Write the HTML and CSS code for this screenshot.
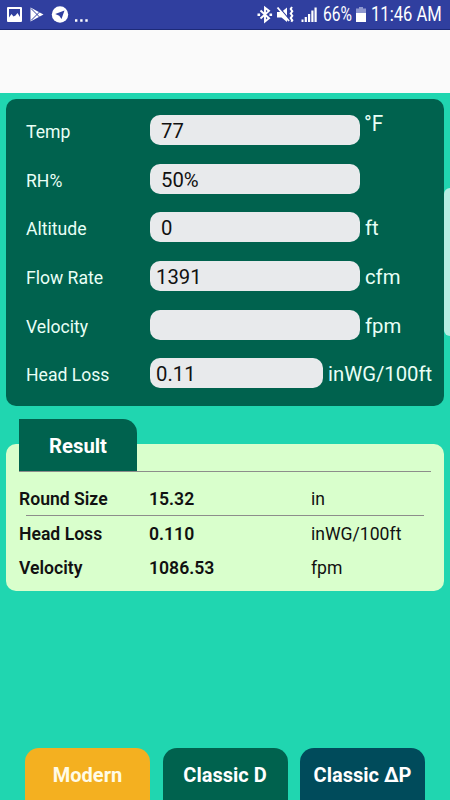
FILE: index.html
```
<!DOCTYPE html>
<html lang="en">
<head>
    <meta charset="utf-8">
    <title>Duct Sizer</title>
    <link rel="stylesheet" href="styles.css">
</head>
<body>
<div class="status-bar">
    <svg class="status-icons" width="90" height="30" viewBox="0 0 90 30">
        <path fill="#fff" fill-rule="evenodd" d="M8 7h13a1 1 0 0 1 1 1v13a1 1 0 0 1-1 1H8a1 1 0 0 1-1-1V8a1 1 0 0 1 1-1zM9 9v8.500l2.500-3.500 2 2.500 2-1 2-2.500 2.500 4V9z"/>
        <path fill="#fff" d="M30.500 7.500v14l13-7z"/>
        <path fill="none" stroke="#303f9f" stroke-width="1" d="M31 8.500l8.500 8.500M31 20.500l8.500-8.500"/>
        <circle cx="60" cy="14.500" r="8.200" fill="#fff"/>
        <path fill="#303f9f" d="M64.500 10.500l-3 8.500-2.300-3.200-4-1.700z"/>
        <path fill="#fff" d="M75 19.300h2.400v2.400H75zM80.200 19.300h2.400v2.400h-2.400zM85.300 19.300h2.400v2.400h-2.400z"/>
    </svg>
    <div class="status-right">
        <svg width="62" height="30" viewBox="257 0 62 30">
            <path fill="none" stroke="#fff" stroke-width="1.900" d="M260.500 10.500l8.500 7.800-4 3.200V7.700l4 3.200-8.500 7.600"/>
            <path fill="#fff" d="M257.500 13.500h2.600v2.400h-2.600zM269.500 13.500h2.600v2.400h-2.600zM277 12h4.500l5.500-4.500v14.500l-5.500-4.500H277z"/>
            <path stroke="#303f9f" stroke-width="1.200" d="M279.200 7.500l10.500 12.500"/>
            <path stroke="#fff" stroke-width="1.900" d="M277.500 7.500l11.500 13.500"/>
            <path fill="none" stroke="#fff" stroke-width="2" d="M292 7l-1.300 2 1.600 2.200-1.600 2.300 1.600 2.300-1.600 2.300 1.600 2.200-1 1.500"/>
            <path fill="#fff" d="M301.500 19.500h2v2.500h-2zM304.700 17h2.200v5h-2.200zM308 14h2.200v8H308zM311.300 10.500h2.200V22h-2.200zM314.500 7.500h2.200V22h-2.200z"/>
        </svg>
        <span class="percent">66%</span>
        <svg class="battery" width="10" height="30" viewBox="0 0 10 30">
            <path fill="#8f98cf" d="M3 7h4v1.500h3V13H0V8.500h3z"/>
            <path fill="#fff" d="M0 13h10v9H0z"/>
        </svg>
        <span class="clock">11:46 AM</span>
    </div>
</div>
<div class="app-bar"></div>

<div class="content">
    <div class="panel">
        <div class="row"><label>Temp</label><div class="field indent">77</div><span class="unit raised">°F</span></div>
        <div class="row"><label>RH%</label><div class="field indent">50%</div></div>
        <div class="row"><label>Altitude</label><div class="field indent">0</div><span class="unit">ft</span></div>
        <div class="row"><label>Flow Rate</label><div class="field">1391</div><span class="unit">cfm</span></div>
        <div class="row"><label>Velocity</label><div class="field"></div><span class="unit">fpm</span></div>
        <div class="row"><label>Head Loss</label><div class="field short">0.11</div><span class="unit">inWG/100ft</span></div>
    </div>

    <div class="result">
        <div class="result-head"><div class="result-title">Result</div></div>
        <div class="result-row first"><b>Round Size</b><b>15.32</b><span>in</span></div>
        <div class="divider"></div>
        <div class="result-row"><b>Head Loss</b><b>0.110</b><span>inWG/100ft</span></div>
        <div class="result-row"><b>Velocity</b><b>1086.53</b><span>fpm</span></div>
    </div>

    <div class="tabs">
        <div class="tab modern">Modern</div>
        <div class="tab classic-d">Classic D</div>
        <div class="tab classic-p">Classic ΔP</div>
    </div>
    <div class="side-handle"></div>
</div>
</body>
</html>
```
FILE: styles.css
```
* {
    box-sizing: border-box;
}

body {
    font-family: Roboto, sans-serif;
    margin: 0;
    height: 800px;
    display: flex;
    flex-direction: column;
    overflow: hidden;
    background-color: #20d6b0;
}

.status-bar {
    height: 30px;
    background-color: #303f9f;
    border-bottom: 1px solid #1d2a78;
    color: #fff;
    display: flex;
    justify-content: space-between;
    flex-shrink: 0;
}

.status-right {
    display: flex;
    padding-right: 9px;
    font-size: 19.5px;
    line-height: 30px;
    white-space: nowrap;
}

.percent {
    width: 29px;
    margin-left: 4px;
    transform: scaleX(0.8);
    transform-origin: left;
}

.battery {
    margin: 0 5px 0 4px;
}

.clock {
    width: 70px;
    transform: scaleX(0.85);
    transform-origin: left;
}

.app-bar {
    height: 63px;
    background-color: #fafafa;
    flex-shrink: 0;
}

.content {
    position: relative;
    flex: 1;
    display: flex;
    flex-direction: column;
    padding: 6px 6px 0;
}

.panel {
    height: 307px;
    background-color: #00624e;
    border-radius: 10px;
    padding: 16px 0 0 20px;
    display: flex;
    flex-direction: column;
    gap: 18.7px;
}

.row {
    display: flex;
    height: 30px;
    line-height: 32px;
    color: #e9fff6;
}

.row label {
    width: 124px;
    font-size: 17.6px;
    line-height: 34px;
}

.field {
    width: 210px;
    height: 30px;
    padding-left: 6px;
    border-radius: 10px;
    background-color: #e8eaec;
    color: #111;
    font-size: 20.3px;
}

.indent {
    padding-left: 11px;
}

.short {
    width: 173px;
}

.unit {
    margin-left: 5px;
    font-size: 20.3px;
}

.raised {
    margin-left: 4px;
    line-height: 17px;
    font-size: 22.5px;
    transform: scaleX(0.92);
    transform-origin: left;
}

.result {
    height: 147px;
    margin-top: 38px;
    padding: 0 13px;
    border-radius: 10px;
    background-color: #d9ffcc;
    color: #111;
}

.result-head {
    height: 53px;
    margin-top: -25px;
    border-bottom: 1px solid #8d8d8b;
}

.result-title {
    width: 118px;
    height: 52px;
    border-top-right-radius: 14px;
    background-color: #00624e;
    color: #fff;
    font-size: 20.3px;
    font-weight: bold;
    line-height: 54px;
    text-align: center;
}

.result-row {
    display: grid;
    grid-template-columns: 130px 162px 1fr;
    height: 34px;
    line-height: 36px;
    font-size: 17.6px;
}

.result-row b {
    font-weight: 600;
}

.first {
    height: 43px;
    line-height: 55px;
}

.divider {
    height: 1px;
    margin: 0 7px;
    background-color: #8d8d8b;
}

.tabs {
    display: flex;
    gap: 12.5px;
    margin: auto 19px 0;
}

.tab {
    flex: 1;
    height: 52px;
    border-radius: 14px 14px 0 0;
    color: #fff;
    font-size: 20px;
    font-weight: bold;
    line-height: 54px;
    text-align: center;
    white-space: nowrap;
}

.modern {
    background-color: #f4b020;
    color: #fffbe6;
}

.classic-d {
    background-color: #00624e;
}

.classic-p {
    background-color: #004b5b;
}

/* pull-out drawer handle on the screen edge */
.side-handle {
    position: absolute;
    top: 95px;
    right: 0;
    width: 6px;
    height: 148px;
    border-radius: 6px 0 0 6px;
    background-color: #b5efe3;
}
```
